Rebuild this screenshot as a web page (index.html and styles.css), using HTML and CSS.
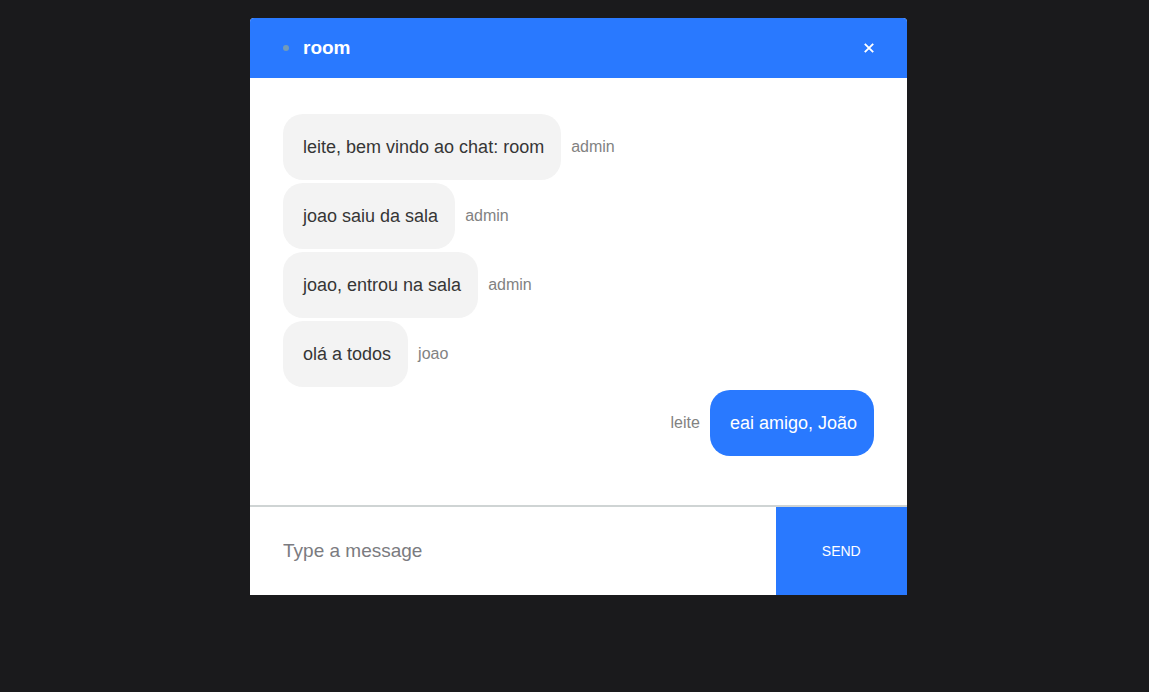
FILE: index.html
```html
<!DOCTYPE html>
<html lang="pt">
<head>
<meta charset="utf-8">
<meta name="viewport" content="width=device-width, initial-scale=1">
<title>room</title>
<link rel="stylesheet" href="styles.css">
</head>
<body>
<main class="chat">
  <header class="chat-header">
    <svg class="status" viewBox="0 0 6 6" width="6" height="6" aria-hidden="true"><circle cx="3" cy="3" r="3"/></svg>
    <h1 class="room-name">room</h1>
    <button class="close" type="button" aria-label="Close">
      <svg viewBox="0 0 10 10" width="10" height="10" fill="none" stroke="currentColor" stroke-width="1.9"><path d="M.8 .8l8.4 8.4M9.2 .8L.8 9.2"/></svg>
    </button>
  </header>
  <section class="messages">
    <div class="message"><p class="bubble">leite, bem vindo ao chat: room</p><span class="sender">admin</span></div>
    <div class="message"><p class="bubble">joao saiu da sala</p><span class="sender">admin</span></div>
    <div class="message"><p class="bubble">joao, entrou na sala</p><span class="sender">admin</span></div>
    <div class="message"><p class="bubble">olá a todos</p><span class="sender">joao</span></div>
    <div class="message message-own"><span class="sender">leite</span><p class="bubble">eai amigo, João</p></div>
  </section>
  <form class="composer">
    <input class="composer-input" type="text" placeholder="Type a message" aria-label="Type a message">
    <button class="send" type="button">SEND</button>
  </form>
</main>
</body>
</html>
```
FILE: styles.css
```css
* {
  box-sizing: border-box;
}

body {
  margin: 0;
  padding: 18px 32px 18px 40px;
  min-height: 100vh;
  background: #1a1a1c;
  font-family: "Liberation Sans", Arial, sans-serif;
}

.chat {
  width: 61%;
  min-width: 320px;
  margin: 0 auto;
  background: #fff;
  border-radius: 4px 4px 0 0;
  overflow: hidden;
}

.chat-header {
  display: flex;
  align-items: center;
  gap: 14px;
  padding: 18px 33px;
  background: #2979ff;
  color: #fff;
}

.status {
  fill: #739bb8;
}

.room-name {
  flex: 1;
  margin: 0;
  font-size: 19px;
  line-height: 24px;
}

.close {
  display: flex;
  padding: 0;
  border: 0;
  background: none;
  color: inherit;
}

.messages {
  display: flex;
  flex-direction: column;
  gap: 3px;
  padding: 36px 33px 49px;
}

.message {
  display: flex;
  align-items: center;
  gap: 10px;
}

.message-own {
  justify-content: flex-end;
}

.bubble {
  margin: 0;
  padding: 20px 17px 20px 20px;
  border-radius: 20px;
  background: #f3f3f3;
  color: #363636;
  font-size: 18px;
  line-height: 26px;
}

.message-own .bubble {
  background: #2979ff;
  color: #fff;
}

.sender {
  color: #828282;
  font-size: 16px;
}

.composer {
  display: flex;
  border-top: 2px solid #cfd4d4;
}

.composer-input {
  width: 80%;
  padding: 32px 33px;
  border: 0;
  font: 19px/24px "Liberation Sans", Arial, sans-serif;
}

.composer-input::placeholder {
  color: #7b7b80;
}

.send {
  width: 20%;
  border: 0;
  background: #2979ff;
  color: #fff;
  font: 14px "Liberation Sans", Arial, sans-serif;
}
```
